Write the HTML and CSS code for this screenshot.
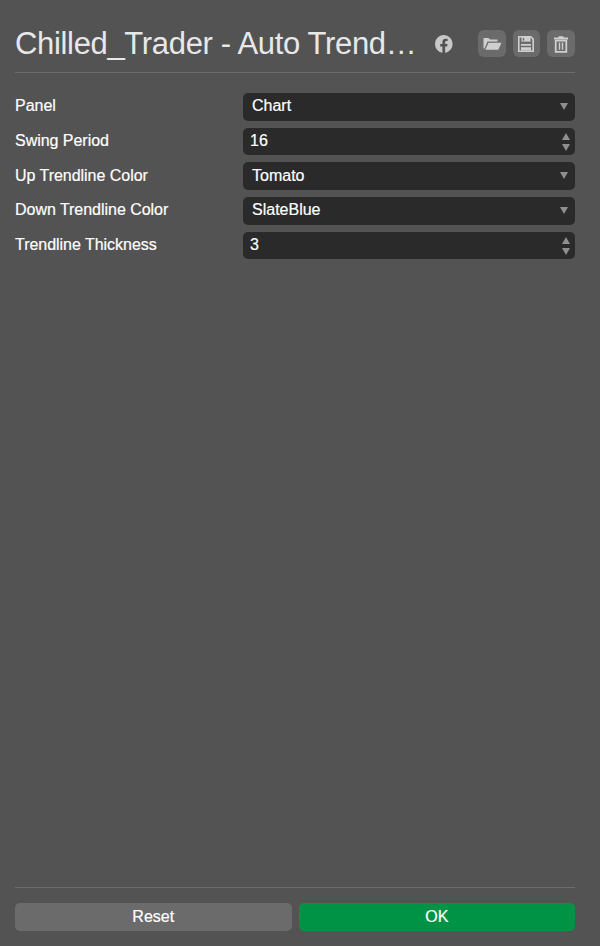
FILE: index.html
```html
<!DOCTYPE html>
<html lang="en">
<head>
    <meta charset="UTF-8" />
    <title>Indicator Settings</title>
    <link rel="stylesheet" href="styles.css">
</head>
<body>

<div class="dialog">
    <div class="dialog-header">
        <h1 class="dialog-title">Chilled_Trader - Auto Trend…</h1>
        <a class="fb-link" href="#" aria-label="Facebook">
            <svg viewBox="0 0 20 20" width="20" height="20">
                <path fill="#c8c8c8" d="M10 1a9 9 0 0 0-1.6 17.86v-6.3H6.2V10h2.2V8.1c0-2.2 1.3-3.4 3.3-3.4.95 0 1.95.17 1.95.17v2.15h-1.1c-1.08 0-1.42.67-1.42 1.36V10h2.42l-.39 2.56h-2.03v6.3A9 9 0 0 0 10 1z"/>
            </svg>
        </a>
        <div class="header-tools">
            <button class="tool-btn" aria-label="Open">
                <svg viewBox="0 0 20 20" width="20" height="20">
                    <path fill="#cfcfcf" d="M1.5 4h5l1.5 1.6h7.5v1.9H5.5L2.6 14.5H1.5z"/>
                    <path fill="#cfcfcf" d="M6.5 8.7h13l-3.2 7H3.3z"/>
                </svg>
            </button>
            <button class="tool-btn" aria-label="Save">
                <svg viewBox="0 0 20 20" width="20" height="20">
                    <path fill="none" stroke="#cfcfcf" stroke-width="1.6" d="M2.8 2.8h12l2.4 2.4v12H2.8z"/>
                    <path fill="#cfcfcf" d="M5.5 3h9v4.6h-9z"/>
                    <path fill="#6b6b6b" d="M6.8 4h1.4v2.6H6.8z"/>
                    <path fill="#cfcfcf" d="M5 10h10v1.7H5zM5 13.2h10v3.2H5z"/>
                </svg>
            </button>
            <button class="tool-btn" aria-label="Delete">
                <svg viewBox="0 0 20 20" width="20" height="20">
                    <path fill="#cfcfcf" d="M3 3.6h4.2l.7-1.4h4.2l.7 1.4H17v1.8H3z"/>
                    <path fill="none" stroke="#cfcfcf" stroke-width="1.8" d="M4.7 6.6h10.6v11.2H4.7z"/>
                    <path fill="#cfcfcf" d="M7.8 8.6h1.4v7.2H7.8zM10.8 8.6h1.4v7.2h-1.4z"/>
                </svg>
            </button>
        </div>
    </div>

    <div class="dialog-body">
        <div class="form-row">
            <label>Panel</label>
            <div class="field field-select">Chart<span class="arrow-down"></span></div>
        </div>
        <div class="form-row">
            <label>Swing Period</label>
            <div class="field field-number">16<span class="spinner"><span class="arrow-up"></span><span class="arrow-down"></span></span></div>
        </div>
        <div class="form-row">
            <label>Up Trendline Color</label>
            <div class="field field-select">Tomato<span class="arrow-down"></span></div>
        </div>
        <div class="form-row">
            <label>Down Trendline Color</label>
            <div class="field field-select">SlateBlue<span class="arrow-down"></span></div>
        </div>
        <div class="form-row">
            <label>Trendline Thickness</label>
            <div class="field field-number">3<span class="spinner"><span class="arrow-up"></span><span class="arrow-down"></span></span></div>
        </div>
    </div>

    <div class="dialog-footer">
        <button class="reset-btn">Reset</button>
        <button class="ok-btn">OK</button>
    </div>
</div>

</body>
</html>
```

FILE: styles.css
```css
html,
body {
    height: 100%;
}

body {
    margin: 0;
    background: #535353;
    color: #fff;
    font-family: "Liberation Sans", Arial, sans-serif;
    overflow: hidden;
}

.dialog {
    display: flex;
    flex-direction: column;
    height: 946px;
    padding: 0 25px 15px 15px;
    box-sizing: border-box;
}

.dialog-header {
    display: flex;
    align-items: center;
    height: 57px;
    padding-top: 15px;
    border-bottom: 1px solid #6b6b6b;
}

.dialog-title {
    width: 400px;
    margin: 0;
    font-size: 31px;
    font-weight: normal;
    letter-spacing: -0.33px;
    color: #e8e8e8;
    white-space: nowrap;
}

.fb-link {
    display: flex;
    margin-left: 19px;
}

.header-tools {
    display: flex;
    gap: 7px;
    margin-left: 24px;
}

.tool-btn {
    display: flex;
    align-items: center;
    justify-content: center;
    width: 27.5px;
    height: 27.5px;
    padding: 0;
    border: none;
    border-radius: 6px;
    background: #6b6b6b;
}

.dialog-body {
    flex: 1;
    display: flex;
    flex-direction: column;
    gap: 7px;
    padding-top: 20px;
}

.form-row {
    display: flex;
    align-items: center;
    height: 27.7px;
}

.form-row label {
    width: 228px;
    padding-bottom: 1px;
    font-size: 16px;
    letter-spacing: -0.03px;
    -webkit-text-stroke: 0.2px #fff;
}

.field {
    position: relative;
    flex: 1;
    display: flex;
    align-items: center;
    height: 100%;
    padding-bottom: 1px;
    box-sizing: border-box;
    border-radius: 5px;
    background: #2a2a2a;
    font-size: 16px;
    -webkit-text-stroke: 0.2px #fff;
}

.field-select {
    padding-left: 9px;
}

.field-number {
    padding-left: 7px;
}

.arrow-down,
.arrow-up {
    display: block;
    width: 0;
    height: 0;
    border-left: 4px solid transparent;
    border-right: 4px solid transparent;
}

.arrow-down {
    border-top: 7px solid #8f8f8f;
}

.arrow-up {
    border-bottom: 7px solid #8f8f8f;
}

.field-select .arrow-down {
    position: absolute;
    right: 7px;
    top: 10px;
}

.spinner {
    position: absolute;
    right: 5px;
    top: 5px;
    display: flex;
    flex-direction: column;
    gap: 4px;
}

.dialog-footer {
    display: flex;
    gap: 7px;
    height: 28px;
    padding-top: 15px;
    border-top: 1px solid #6b6b6b;
}

.dialog-footer button {
    flex: 1;
    border: none;
    border-radius: 5px;
    color: #fff;
    font-family: inherit;
    font-size: 16px;
    -webkit-text-stroke: 0.2px #fff;
}

.reset-btn {
    background: #6b6b6b;
}

.ok-btn {
    background: #009345;
}
```
